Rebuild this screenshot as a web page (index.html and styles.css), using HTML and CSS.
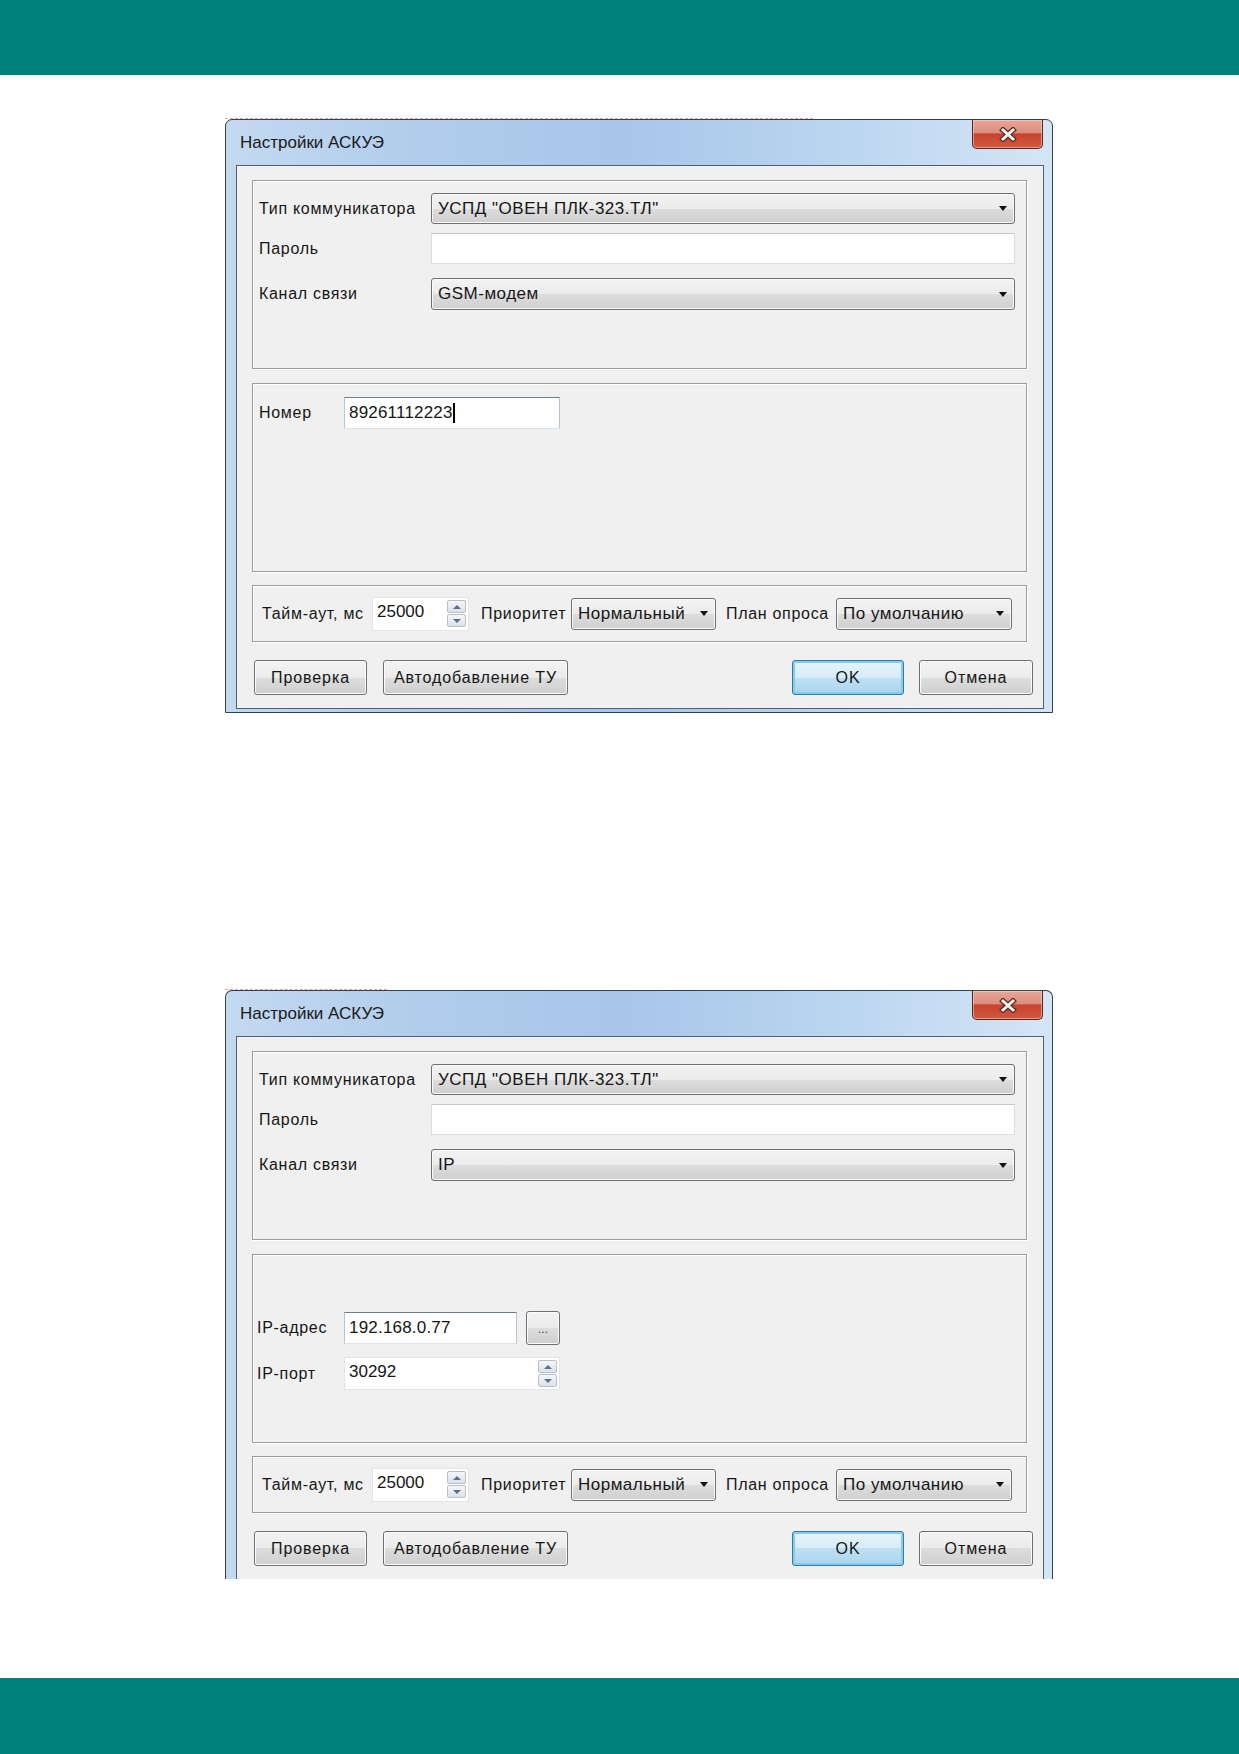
FILE: index.html
```html
<!DOCTYPE html>
<html lang="ru">

<head>
  <meta charset="UTF-8">
  <title>Настройки АСКУЭ</title>
  <link rel="stylesheet" href="styles.css">
</head>

<body>
  <div class="page">
    <div class="band"></div>

    <div class="sheet">
      <!-- канал связи: GSM-модем -->
      <div class="shot shot-gsm">
        <div class="ink ink-long"></div>
        <div class="window">
          <div class="titlebar">
            <span class="caption">Настройки АСКУЭ</span>
            <span class="close">
              <svg width="20" height="15" viewBox="0 0 20 15">
                <path d="M5 3 L15 12 M15 3 L5 12" stroke="#5a2a22" stroke-width="5.5" stroke-linecap="square" fill="none" />
                <path d="M5 3 L15 12 M15 3 L5 12" stroke="#f4f4f4" stroke-width="3" stroke-linecap="square" fill="none" />
              </svg>
            </span>
          </div>
          <div class="client">
            <div class="group group-main">
              <div class="field-row">
                <span class="lbl">Тип коммуникатора</span>
                <div class="combo">УСПД "ОВЕН ПЛК-323.ТЛ"</div>
              </div>
              <div class="field-row">
                <span class="lbl">Пароль</span>
                <div class="edit"></div>
              </div>
              <div class="field-row spaced">
                <span class="lbl">Канал связи</span>
                <div class="combo">GSM-модем</div>
              </div>
            </div>

            <div class="group group-channel">
              <div class="phone-row">
                <span class="lbl">Номер</span>
                <div class="edit edit-focus">89261112223<i class="caret"></i></div>
              </div>
            </div>

            <div class="group group-poll">
              <span class="lbl lbl-timeout">Тайм-аут, мс</span>
              <div class="spin spin-timeout">25000<span class="spin-btns"><i class="up"></i><i class="down"></i></span></div>
              <span class="lbl lbl-prio">Приоритет</span>
              <div class="combo combo-prio">Нормальный</div>
              <span class="lbl lbl-plan">План опроса</span>
              <div class="combo combo-plan">По умолчанию</div>
            </div>

            <div class="actions">
              <span class="btn btn-check">Проверка</span>
              <span class="btn btn-auto">Автодобавление ТУ</span>
              <span class="btn btn-ok">OK</span>
              <span class="btn btn-cancel">Отмена</span>
            </div>
          </div>
        </div>
      </div>

      <!-- канал связи: IP -->
      <div class="shot shot-ip">
        <div class="ink ink-short"></div>
        <div class="window cut">
          <div class="titlebar">
            <span class="caption">Настройки АСКУЭ</span>
            <span class="close">
              <svg width="20" height="15" viewBox="0 0 20 15">
                <path d="M5 3 L15 12 M15 3 L5 12" stroke="#5a2a22" stroke-width="5.5" stroke-linecap="square" fill="none" />
                <path d="M5 3 L15 12 M15 3 L5 12" stroke="#f4f4f4" stroke-width="3" stroke-linecap="square" fill="none" />
              </svg>
            </span>
          </div>
          <div class="client">
            <div class="group group-main">
              <div class="field-row">
                <span class="lbl">Тип коммуникатора</span>
                <div class="combo">УСПД "ОВЕН ПЛК-323.ТЛ"</div>
              </div>
              <div class="field-row">
                <span class="lbl">Пароль</span>
                <div class="edit"></div>
              </div>
              <div class="field-row spaced">
                <span class="lbl">Канал связи</span>
                <div class="combo">IP</div>
              </div>
            </div>

            <div class="group group-channel group-ip">
              <div class="ip-grid">
                <span class="lbl">IP-адрес</span>
                <div class="edit edit-focus">192.168.0.77</div>
                <span class="btn btn-dots">...</span>
                <span class="lbl">IP-порт</span>
                <div class="spin spin-port">30292<span class="spin-btns"><i class="up"></i><i class="down"></i></span></div>
              </div>
            </div>

            <div class="group group-poll">
              <span class="lbl lbl-timeout">Тайм-аут, мс</span>
              <div class="spin spin-timeout">25000<span class="spin-btns"><i class="up"></i><i class="down"></i></span></div>
              <span class="lbl lbl-prio">Приоритет</span>
              <div class="combo combo-prio">Нормальный</div>
              <span class="lbl lbl-plan">План опроса</span>
              <div class="combo combo-plan">По умолчанию</div>
            </div>

            <div class="actions">
              <span class="btn btn-check">Проверка</span>
              <span class="btn btn-auto">Автодобавление ТУ</span>
              <span class="btn btn-ok">OK</span>
              <span class="btn btn-cancel">Отмена</span>
            </div>
          </div>
        </div>
      </div>
    </div>

    <div class="band band-bottom"></div>
  </div>
</body>

</html>
```

FILE: styles.css
```css
* {
  box-sizing: border-box;
}

body {
  margin: 0;
  background: #fff;
  font-family: "Liberation Sans", Arial, sans-serif;
  font-size: 16px;
  color: #161616;
}

.page {
  display: flex;
  flex-direction: column;
  min-height: 1754px;
}

.band {
  height: 75px;
  background: #00807d;
}

.band-bottom {
  height: 76px;
  margin-top: auto;
}

.sheet {
  padding-left: 225px;
}

.shot-gsm {
  margin-top: 43px;
}

.shot-ip {
  margin-top: 276px;
}

/* red spell-check trace above the window */
.ink {
  height: 1px;
  border-top: 1px dashed #f09a9a;
}

.ink-long {
  width: 588px;
}

.ink-short {
  width: 162px;
}

/* window frame */
.window {
  width: 828px;
  border: 1px solid #34424f;
  border-radius: 7px 7px 0 0;
  padding: 0 8px 3px 10px;
  background: linear-gradient(90deg, #c3d9f0 0%, #b2cdec 22%, #a7c6ea 48%, #b9d4ef 72%, #d4e5f6 100%);
}

.window.cut {
  border-bottom: 0;
  padding-bottom: 0;
}

.titlebar {
  display: flex;
  align-items: center;
  height: 45px;
}

.caption {
  margin-left: 4px;
  font-size: 17px;
  color: #1a1a1a;
}

.close {
  align-self: flex-start;
  margin-left: auto;
  margin-right: 1px;
  width: 71px;
  height: 29px;
  display: flex;
  align-items: center;
  justify-content: center;
  border: 1px solid #5b241b;
  border-top: 0;
  border-radius: 0 0 5px 5px;
  background: linear-gradient(#e6a698 0%, #dc8e7e 45%, #c8432d 50%, #cf5a40 100%);
  box-shadow: inset 0 0 0 1px rgba(255, 220, 210, 0.5);
}

.client {
  border: 1px solid #4f6073;
  background: #f0f0f0;
  padding: 14px 16px 12px 15px;
}

.cut .client {
  border-bottom: 0;
}

/* group boxes */
.group {
  border: 1px solid #9c9c9c;
  box-shadow: inset 1px 1px 0 #fff, 1px 1px 0 #fff;
}

.group + .group {
  margin-top: 14px;
}

.group-main {
  height: 189px;
  padding: 12px 11px 0 6px;
}

.group-channel {
  height: 189px;
  padding: 13px 0 0 6px;
}

.group.group-poll {
  height: 57px;
  margin-top: 13px;
  padding-left: 9px;
  display: flex;
  align-items: center;
}

.field-row {
  display: grid;
  grid-template-columns: 172px 1fr;
  align-items: center;
  height: 31px;
}

.field-row + .field-row {
  margin-top: 9px;
}

.field-row.spaced {
  margin-top: 14px;
  height: 32px;
}

.lbl {
  white-space: nowrap;
  letter-spacing: 0.7px;
}

/* combo box, Windows 7 look */
.combo {
  display: flex;
  align-items: center;
  height: 100%;
  padding: 0 7px 0 6px;
  border: 1px solid #707070;
  border-radius: 3px;
  background: linear-gradient(#f3f3f3 0%, #ebebeb 50%, #dddddd 50%, #cfcfcf 100%);
  box-shadow: inset 0 0 0 1px #fafafa;
  font-size: 17px;
  letter-spacing: 0.5px;
  white-space: nowrap;
}

.combo::after {
  content: "";
  margin-left: auto;
  border-left: 4px solid transparent;
  border-right: 4px solid transparent;
  border-top: 5px solid #111;
}

.edit {
  height: 100%;
  background: #fff;
  border: 1px solid #dadde3;
  border-top-color: #c3c7ce;
  font-size: 17px;
  letter-spacing: 0.2px;
  display: flex;
  align-items: center;
  padding-left: 4px;
}

.edit-focus {
  border-color: #6d7c8f #b6c3d1 #dbe3ec #b6c3d1;
}

.caret {
  display: inline-block;
  width: 2px;
  height: 20px;
  background: #000;
}

.phone-row {
  display: grid;
  grid-template-columns: 85px 216px;
  align-items: center;
  height: 32px;
}

.group.group-ip {
  padding-top: 56px;
  padding-left: 4px;
}

.ip-grid {
  display: grid;
  grid-template-columns: 78px 173px 34px;
  grid-template-rows: 34px 33px;
  column-gap: 9px;
  row-gap: 12px;
  align-items: center;
}

.ip-grid .edit {
  height: 32px;
}

.spin-port {
  grid-column: 2 / 4;
  height: 33px;
}

/* spin edit */
.spin {
  display: flex;
  align-items: center;
  background: #fff;
  border: 1px solid #e1e4e8;
  font-size: 17px;
  padding: 0 2px 4px 4px;
}

.spin-timeout {
  width: 97px;
  height: 34px;
}

.spin-btns {
  margin-left: auto;
  display: flex;
  flex-direction: column;
  gap: 1px;
  margin-top: 4px;
}

.spin-btns i {
  width: 19px;
  height: 13px;
  display: flex;
  align-items: center;
  justify-content: center;
  border: 1px solid #b8bfc8;
  border-radius: 2px;
  background: linear-gradient(#f4f6f8, #dde2e8);
}

.spin-btns .up::after {
  content: "";
  border-left: 4px solid transparent;
  border-right: 4px solid transparent;
  border-bottom: 4px solid #5a6f8f;
}

.spin-btns .down::after {
  content: "";
  border-left: 4px solid transparent;
  border-right: 4px solid transparent;
  border-top: 4px solid #5a6f8f;
}

.lbl-timeout {
  width: 110px;
}

.lbl-prio {
  width: 90px;
  margin-left: 12px;
}

.lbl-plan {
  width: 110px;
  margin-left: 10px;
}

.combo-prio {
  width: 145px;
  height: 32px;
}

.combo-plan {
  width: 176px;
  height: 32px;
}

/* buttons */
.actions {
  display: flex;
  margin: 18px -6px 0 2px;
  height: 36px;
}

.btn {
  display: flex;
  align-items: center;
  justify-content: center;
  height: 35px;
  border: 1px solid #707070;
  border-radius: 3px;
  background: linear-gradient(#f3f3f3 0%, #ebebeb 50%, #dddddd 50%, #cfcfcf 100%);
  box-shadow: inset 0 0 0 1px #fcfcfc;
  letter-spacing: 0.9px;
  white-space: nowrap;
}

.btn-check {
  width: 113px;
}

.btn-auto {
  width: 185px;
  margin-left: 16px;
}

.btn-ok {
  width: 112px;
  margin-left: auto;
  border-color: #2f7bac;
  background: linear-gradient(#e8f4fb 0%, #d6ecf8 50%, #bfe0f2 50%, #a9d5ee 100%);
  box-shadow: inset 0 0 0 2px #86cbea;
}

.btn-cancel {
  width: 114px;
  margin-left: 15px;
}

.btn-dots {
  width: 34px;
  height: 34px;
  align-items: flex-end;
  padding-bottom: 8px;
  font-size: 12px;
  letter-spacing: 0;
  color: #444;
}
```
